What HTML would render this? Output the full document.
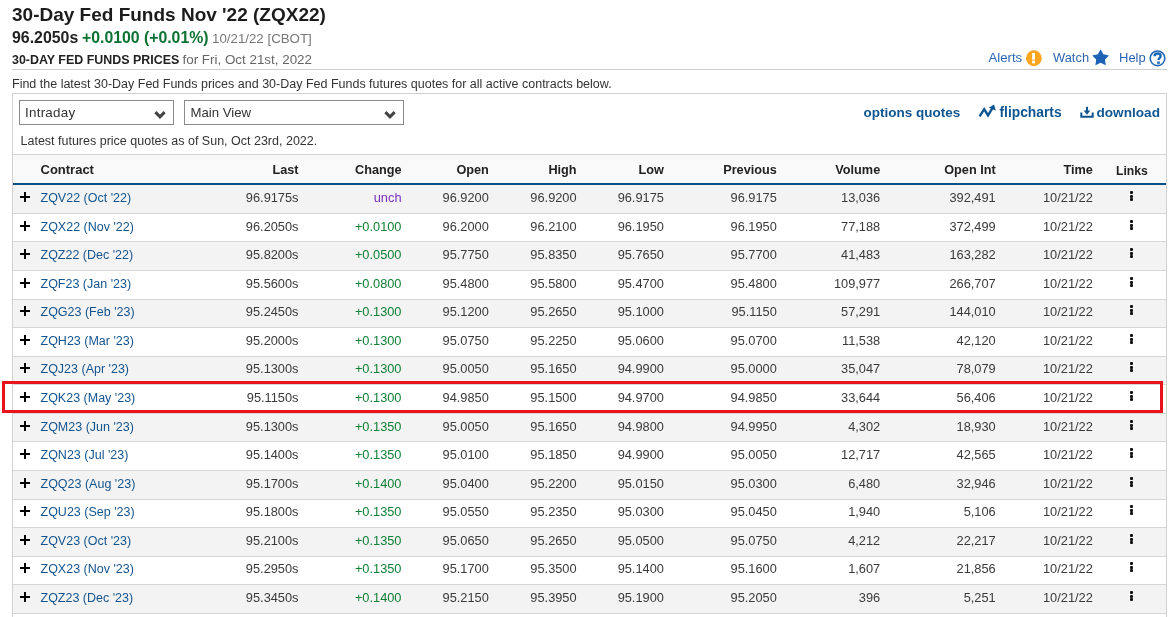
<!DOCTYPE html>
<html><head><meta charset="utf-8"><style>
*{margin:0;padding:0;box-sizing:border-box}
html,body{width:1170px;height:617px;overflow:hidden;background:#fff}
body{font-family:"Liberation Sans",sans-serif;color:#333;position:relative}
.wrap{position:absolute;left:0;top:0;width:1170px;height:617px;overflow:hidden;will-change:transform}
.a{position:absolute;white-space:nowrap;line-height:20px}
.r{text-align:right}
.title{font-size:19px;font-weight:bold;color:#1c1c1c}
.l2{font-size:15.9px;font-weight:bold;color:#222}
.g2{font-size:15.8px;font-weight:bold;color:#0b7232}
.d2{font-size:13.3px;color:#777}
.l3{font-size:12.45px;font-weight:bold;color:#222}
.f3{font-size:13.4px;color:#666}
.find{font-size:12.5px;color:#333}
.hr{position:absolute;left:12px;width:1155px;top:69px;height:1px;background:#cdcdcd}
.tool{font-size:13px;color:#2d66b3}
.box{position:absolute;left:12px;top:93px;width:1155px;height:540px;border:1px solid #d0d0d0;border-bottom:none;background:#fff}
.sel{position:absolute;top:100px;height:25px;border:1px solid #8a8a8a;background:#fff}
.selt{font-size:13.6px;color:#333}
.lnk{font-size:13.6px;font-weight:bold;color:#0f5591}
.latest{font-size:12.5px;color:#333}
.thead{position:absolute;left:13px;width:1153px;top:154px;height:31px;background:#f9f9f9;border-top:1px solid #d5d5d5;border-bottom:2px solid #0b4f8a}
.row{position:absolute;left:13px;width:1153px}
.odd{background:#f3f3f3}
.bd{position:absolute;left:13px;width:1153px;height:1px;background:#d6d6d6}
.th{font-size:12.7px;font-weight:bold;color:#222}
.td{font-size:12.8px;color:#3a3a3a}
.cl{font-size:12.5px;color:#14548e}
.up{color:#108035}
.un{color:#7a2fc4}
.plus{position:absolute;width:10px;height:10px}
.plus:before{content:"";position:absolute;left:0;top:3.7px;width:10.2px;height:2.6px;background:#000}
.plus:after{content:"";position:absolute;left:3.8px;top:0;width:2.6px;height:10.2px;background:#000}
.dots{position:absolute;left:1130px;width:3px}
.dots i{position:absolute;left:0;width:3px;height:3px;background:#111;border-radius:1px}
.red{position:absolute;left:2px;top:381px;width:1161px;height:32px;border:3px solid #e8141c}
</style></head><body><div class="wrap">
<div class="a title" style="left:12px;top:4.92px">30-Day Fed Funds Nov '22 (ZQX22)</div>
<div class="a l2" style="left:12px;top:27.79px">96.2050s</div>
<div class="a g2" style="left:82px;top:27.83px">+0.0100 (+0.01%)</div>
<div class="a d2" style="left:212px;top:28.69px">10/21/22 [CBOT]</div>
<div class="a l3" style="left:12px;top:50.19px">30-DAY FED FUNDS PRICES</div>
<div class="a f3" style="left:182.5px;top:49.86px">for Fri, Oct 21st, 2022</div>
<div class="a tool" style="left:988.5px;top:48.03px;font-size:13.2px">Alerts</div>
<div class="a tool" style="left:1053px;top:48.13px;font-size:12.9px">Watch</div>
<div class="a tool" style="left:1119px;top:48.10px">Help</div>
<svg style="position:absolute;left:1025px;top:49.5px" width="17" height="17" viewBox="0 0 17 17"><circle cx="8.9" cy="8.25" r="7.9" fill="#fda51e"/><rect x="7.1" y="3" width="2.8" height="6.7" fill="#fff"/><rect x="7.1" y="10.6" width="2.8" height="2.8" fill="#fff"/></svg>
<svg style="position:absolute;left:1091.5px;top:49.3px" width="18" height="17" viewBox="0 0 18 17"><path d="M8.60 0.30 L11.34 5.33 L16.97 6.38 L13.04 10.54 L13.77 16.22 L8.60 13.76 L3.43 16.22 L4.16 10.54 L0.23 6.38 L5.86 5.33 Z" fill="#1c63b6"/></svg>
<svg style="position:absolute;left:1148.5px;top:49.5px" width="17" height="17" viewBox="0 0 17 17"><circle cx="8.5" cy="8.3" r="7.3" fill="none" stroke="#1f68b9" stroke-width="1.6"/><path d="M5.6 6.3 C5.6 4.3 7 3.4 8.6 3.4 C10.4 3.4 11.6 4.5 11.6 6 C11.6 8.1 9.5 8.2 9.5 10.1" fill="none" stroke="#1f68b9" stroke-width="2.5"/><rect x="8.2" y="11.4" width="2.6" height="2.5" fill="#1f68b9"/></svg>
<div class="hr"></div>
<div class="a find" style="left:12px;top:74.27px">Find the latest 30-Day Fed Funds prices and 30-Day Fed Funds futures quotes for all active contracts below.</div>
<div class="box"></div>
<div class="sel" style="left:19px;width:155px"></div>
<div class="sel" style="left:184px;width:220px"></div>
<div class="a selt" style="left:25px;top:102.86px;font-size:13.4px;letter-spacing:0.25px">Intraday</div>
<div class="a selt" style="left:190.5px;top:102.93px;font-size:13.2px">Main View</div>
<svg style="position:absolute;left:154px;top:110px" width="12" height="9" viewBox="0 0 12 9"><path d="M1.4 2.2 L6 6.8 L10.6 2.2" fill="none" stroke="#444" stroke-width="3.1"/></svg>
<svg style="position:absolute;left:384px;top:110px" width="12" height="9" viewBox="0 0 12 9"><path d="M1.4 2.2 L6 6.8 L10.6 2.2" fill="none" stroke="#444" stroke-width="3.1"/></svg>
<div class="a lnk" style="left:863.5px;top:103.02px;font-size:13.5px">options quotes</div>
<div class="a lnk" style="left:999.5px;top:102.92px;font-size:13.8px">flipcharts</div>
<div class="a lnk" style="left:1096.5px;top:102.99px;font-size:13.6px">download</div>
<svg style="position:absolute;left:978px;top:104px" width="19" height="14" viewBox="0 0 19 14"><path d="M1.6 12.4 L6.2 5.2 L10 11.4 L14.4 4.2" fill="none" stroke="#0f5591" stroke-width="2.4" stroke-linejoin="miter"/><path d="M10.8 3.8 L16 0.6 L17.8 6.4 Z" fill="#0f5591"/></svg>
<svg style="position:absolute;left:1080px;top:106px" width="14" height="12" viewBox="0 0 14 12"><path d="M1.3 6.5 V10.7 H12.7 V6.5" fill="none" stroke="#0f5591" stroke-width="2"/><rect x="6" y="0.8" width="2" height="5" fill="#0f5591"/><path d="M3.6 4.6 H10.4 L7 8.8 Z" fill="#0f5591"/></svg>
<div class="a latest" style="left:20.5px;top:131.37px">Latest futures price quotes as of Sun, Oct 23rd, 2022.</div>
<div class="thead"></div>
<div class="a th" style="left:40.5px;top:160.30px;font-size:13px">Contract</div>
<div class="a th r" style="right:871.5px;top:160.40px">Last</div>
<div class="a th r" style="right:768.5px;top:160.40px">Change</div>
<div class="a th r" style="right:681.2px;top:160.40px">Open</div>
<div class="a th r" style="right:593.4px;top:160.40px">High</div>
<div class="a th r" style="right:506.1px;top:160.40px">Low</div>
<div class="a th r" style="right:393.20000000000005px;top:160.40px">Previous</div>
<div class="a th r" style="right:289.79999999999995px;top:160.40px">Volume</div>
<div class="a th r" style="right:174.29999999999995px;top:160.40px">Open Int</div>
<div class="a th r" style="right:77.20000000000005px;top:160.40px">Time</div>
<div class="a th" style="left:1116px;top:160.57px;font-size:12.2px">Links</div>
<div class="row odd" style="top:185px;height:28px"></div>
<div class="bd" style="top:213px"></div>
<div class="plus" style="left:20px;top:192px"></div>
<div class="a cl" style="left:40.5px;top:188.07px">ZQV22 (Oct '22)</div>
<div class="a td r" style="right:871.5px;top:187.96px">96.9175s</div>
<div class="a td r un" style="right:768.5px;top:187.96px">unch</div>
<div class="a td r" style="right:681.2px;top:187.96px">96.9200</div>
<div class="a td r" style="right:593.4px;top:187.96px">96.9200</div>
<div class="a td r" style="right:506.1px;top:187.96px">96.9175</div>
<div class="a td r" style="right:393.20000000000005px;top:187.96px">96.9175</div>
<div class="a td r" style="right:289.79999999999995px;top:187.96px">13,036</div>
<div class="a td r" style="right:174.29999999999995px;top:187.96px">392,491</div>
<div class="a td r" style="right:77.20000000000005px;top:187.96px">10/21/22</div>
<div class="dots" style="top:191px"><i style="top:0"></i><i style="top:3.6px"></i><i style="top:7.2px"></i></div>
<div class="bd" style="top:241px"></div>
<div class="plus" style="left:20px;top:221px"></div>
<div class="a cl" style="left:40.5px;top:216.64px">ZQX22 (Nov '22)</div>
<div class="a td r" style="right:871.5px;top:216.54px">96.2050s</div>
<div class="a td r up" style="right:768.5px;top:216.54px">+0.0100</div>
<div class="a td r" style="right:681.2px;top:216.54px">96.2000</div>
<div class="a td r" style="right:593.4px;top:216.54px">96.2100</div>
<div class="a td r" style="right:506.1px;top:216.54px">96.1950</div>
<div class="a td r" style="right:393.20000000000005px;top:216.54px">96.1950</div>
<div class="a td r" style="right:289.79999999999995px;top:216.54px">77,188</div>
<div class="a td r" style="right:174.29999999999995px;top:216.54px">372,499</div>
<div class="a td r" style="right:77.20000000000005px;top:216.54px">10/21/22</div>
<div class="dots" style="top:220px"><i style="top:0"></i><i style="top:3.6px"></i><i style="top:7.2px"></i></div>
<div class="row odd" style="top:242px;height:28px"></div>
<div class="bd" style="top:270px"></div>
<div class="plus" style="left:20px;top:249px"></div>
<div class="a cl" style="left:40.5px;top:245.21px">ZQZ22 (Dec '22)</div>
<div class="a td r" style="right:871.5px;top:245.11px">95.8200s</div>
<div class="a td r up" style="right:768.5px;top:245.11px">+0.0500</div>
<div class="a td r" style="right:681.2px;top:245.11px">95.7750</div>
<div class="a td r" style="right:593.4px;top:245.11px">95.8350</div>
<div class="a td r" style="right:506.1px;top:245.11px">95.7650</div>
<div class="a td r" style="right:393.20000000000005px;top:245.11px">95.7700</div>
<div class="a td r" style="right:289.79999999999995px;top:245.11px">41,483</div>
<div class="a td r" style="right:174.29999999999995px;top:245.11px">163,282</div>
<div class="a td r" style="right:77.20000000000005px;top:245.11px">10/21/22</div>
<div class="dots" style="top:248px"><i style="top:0"></i><i style="top:3.6px"></i><i style="top:7.2px"></i></div>
<div class="bd" style="top:299px"></div>
<div class="plus" style="left:20px;top:278px"></div>
<div class="a cl" style="left:40.5px;top:273.78px">ZQF23 (Jan '23)</div>
<div class="a td r" style="right:871.5px;top:273.68px">95.5600s</div>
<div class="a td r up" style="right:768.5px;top:273.68px">+0.0800</div>
<div class="a td r" style="right:681.2px;top:273.68px">95.4800</div>
<div class="a td r" style="right:593.4px;top:273.68px">95.5800</div>
<div class="a td r" style="right:506.1px;top:273.68px">95.4700</div>
<div class="a td r" style="right:393.20000000000005px;top:273.68px">95.4800</div>
<div class="a td r" style="right:289.79999999999995px;top:273.68px">109,977</div>
<div class="a td r" style="right:174.29999999999995px;top:273.68px">266,707</div>
<div class="a td r" style="right:77.20000000000005px;top:273.68px">10/21/22</div>
<div class="dots" style="top:277px"><i style="top:0"></i><i style="top:3.6px"></i><i style="top:7.2px"></i></div>
<div class="row odd" style="top:300px;height:27px"></div>
<div class="bd" style="top:327px"></div>
<div class="plus" style="left:20px;top:306px"></div>
<div class="a cl" style="left:40.5px;top:302.35px">ZQG23 (Feb '23)</div>
<div class="a td r" style="right:871.5px;top:302.25px">95.2450s</div>
<div class="a td r up" style="right:768.5px;top:302.25px">+0.1300</div>
<div class="a td r" style="right:681.2px;top:302.25px">95.1200</div>
<div class="a td r" style="right:593.4px;top:302.25px">95.2650</div>
<div class="a td r" style="right:506.1px;top:302.25px">95.1000</div>
<div class="a td r" style="right:393.20000000000005px;top:302.25px">95.1150</div>
<div class="a td r" style="right:289.79999999999995px;top:302.25px">57,291</div>
<div class="a td r" style="right:174.29999999999995px;top:302.25px">144,010</div>
<div class="a td r" style="right:77.20000000000005px;top:302.25px">10/21/22</div>
<div class="dots" style="top:305px"><i style="top:0"></i><i style="top:3.6px"></i><i style="top:7.2px"></i></div>
<div class="bd" style="top:356px"></div>
<div class="plus" style="left:20px;top:335px"></div>
<div class="a cl" style="left:40.5px;top:330.92px">ZQH23 (Mar '23)</div>
<div class="a td r" style="right:871.5px;top:330.82px">95.2000s</div>
<div class="a td r up" style="right:768.5px;top:330.82px">+0.1300</div>
<div class="a td r" style="right:681.2px;top:330.82px">95.0750</div>
<div class="a td r" style="right:593.4px;top:330.82px">95.2250</div>
<div class="a td r" style="right:506.1px;top:330.82px">95.0600</div>
<div class="a td r" style="right:393.20000000000005px;top:330.82px">95.0700</div>
<div class="a td r" style="right:289.79999999999995px;top:330.82px">11,538</div>
<div class="a td r" style="right:174.29999999999995px;top:330.82px">42,120</div>
<div class="a td r" style="right:77.20000000000005px;top:330.82px">10/21/22</div>
<div class="dots" style="top:334px"><i style="top:0"></i><i style="top:3.6px"></i><i style="top:7.2px"></i></div>
<div class="row odd" style="top:357px;height:27px"></div>
<div class="bd" style="top:384px"></div>
<div class="plus" style="left:20px;top:363px"></div>
<div class="a cl" style="left:40.5px;top:359.49px">ZQJ23 (Apr '23)</div>
<div class="a td r" style="right:871.5px;top:359.39px">95.1300s</div>
<div class="a td r up" style="right:768.5px;top:359.39px">+0.1300</div>
<div class="a td r" style="right:681.2px;top:359.39px">95.0050</div>
<div class="a td r" style="right:593.4px;top:359.39px">95.1650</div>
<div class="a td r" style="right:506.1px;top:359.39px">94.9900</div>
<div class="a td r" style="right:393.20000000000005px;top:359.39px">95.0000</div>
<div class="a td r" style="right:289.79999999999995px;top:359.39px">35,047</div>
<div class="a td r" style="right:174.29999999999995px;top:359.39px">78,079</div>
<div class="a td r" style="right:77.20000000000005px;top:359.39px">10/21/22</div>
<div class="dots" style="top:362px"><i style="top:0"></i><i style="top:3.6px"></i><i style="top:7.2px"></i></div>
<div class="bd" style="top:413px"></div>
<div class="plus" style="left:20px;top:392px"></div>
<div class="a cl" style="left:40.5px;top:388.07px">ZQK23 (May '23)</div>
<div class="a td r" style="right:871.5px;top:387.96px">95.1150s</div>
<div class="a td r up" style="right:768.5px;top:387.96px">+0.1300</div>
<div class="a td r" style="right:681.2px;top:387.96px">94.9850</div>
<div class="a td r" style="right:593.4px;top:387.96px">95.1500</div>
<div class="a td r" style="right:506.1px;top:387.96px">94.9700</div>
<div class="a td r" style="right:393.20000000000005px;top:387.96px">94.9850</div>
<div class="a td r" style="right:289.79999999999995px;top:387.96px">33,644</div>
<div class="a td r" style="right:174.29999999999995px;top:387.96px">56,406</div>
<div class="a td r" style="right:77.20000000000005px;top:387.96px">10/21/22</div>
<div class="dots" style="top:391px"><i style="top:0"></i><i style="top:3.6px"></i><i style="top:7.2px"></i></div>
<div class="row odd" style="top:414px;height:27px"></div>
<div class="bd" style="top:441px"></div>
<div class="plus" style="left:20px;top:421px"></div>
<div class="a cl" style="left:40.5px;top:416.64px">ZQM23 (Jun '23)</div>
<div class="a td r" style="right:871.5px;top:416.53px">95.1300s</div>
<div class="a td r up" style="right:768.5px;top:416.53px">+0.1350</div>
<div class="a td r" style="right:681.2px;top:416.53px">95.0050</div>
<div class="a td r" style="right:593.4px;top:416.53px">95.1650</div>
<div class="a td r" style="right:506.1px;top:416.53px">94.9800</div>
<div class="a td r" style="right:393.20000000000005px;top:416.53px">94.9950</div>
<div class="a td r" style="right:289.79999999999995px;top:416.53px">4,302</div>
<div class="a td r" style="right:174.29999999999995px;top:416.53px">18,930</div>
<div class="a td r" style="right:77.20000000000005px;top:416.53px">10/21/22</div>
<div class="dots" style="top:420px"><i style="top:0"></i><i style="top:3.6px"></i><i style="top:7.2px"></i></div>
<div class="bd" style="top:470px"></div>
<div class="plus" style="left:20px;top:449px"></div>
<div class="a cl" style="left:40.5px;top:445.21px">ZQN23 (Jul '23)</div>
<div class="a td r" style="right:871.5px;top:445.10px">95.1400s</div>
<div class="a td r up" style="right:768.5px;top:445.10px">+0.1350</div>
<div class="a td r" style="right:681.2px;top:445.10px">95.0100</div>
<div class="a td r" style="right:593.4px;top:445.10px">95.1850</div>
<div class="a td r" style="right:506.1px;top:445.10px">94.9900</div>
<div class="a td r" style="right:393.20000000000005px;top:445.10px">95.0050</div>
<div class="a td r" style="right:289.79999999999995px;top:445.10px">12,717</div>
<div class="a td r" style="right:174.29999999999995px;top:445.10px">42,565</div>
<div class="a td r" style="right:77.20000000000005px;top:445.10px">10/21/22</div>
<div class="dots" style="top:448px"><i style="top:0"></i><i style="top:3.6px"></i><i style="top:7.2px"></i></div>
<div class="row odd" style="top:471px;height:28px"></div>
<div class="bd" style="top:499px"></div>
<div class="plus" style="left:20px;top:478px"></div>
<div class="a cl" style="left:40.5px;top:473.78px">ZQQ23 (Aug '23)</div>
<div class="a td r" style="right:871.5px;top:473.67px">95.1700s</div>
<div class="a td r up" style="right:768.5px;top:473.67px">+0.1400</div>
<div class="a td r" style="right:681.2px;top:473.67px">95.0400</div>
<div class="a td r" style="right:593.4px;top:473.67px">95.2200</div>
<div class="a td r" style="right:506.1px;top:473.67px">95.0150</div>
<div class="a td r" style="right:393.20000000000005px;top:473.67px">95.0300</div>
<div class="a td r" style="right:289.79999999999995px;top:473.67px">6,480</div>
<div class="a td r" style="right:174.29999999999995px;top:473.67px">32,946</div>
<div class="a td r" style="right:77.20000000000005px;top:473.67px">10/21/22</div>
<div class="dots" style="top:477px"><i style="top:0"></i><i style="top:3.6px"></i><i style="top:7.2px"></i></div>
<div class="bd" style="top:527px"></div>
<div class="plus" style="left:20px;top:506px"></div>
<div class="a cl" style="left:40.5px;top:502.35px">ZQU23 (Sep '23)</div>
<div class="a td r" style="right:871.5px;top:502.25px">95.1800s</div>
<div class="a td r up" style="right:768.5px;top:502.25px">+0.1350</div>
<div class="a td r" style="right:681.2px;top:502.25px">95.0550</div>
<div class="a td r" style="right:593.4px;top:502.25px">95.2350</div>
<div class="a td r" style="right:506.1px;top:502.25px">95.0300</div>
<div class="a td r" style="right:393.20000000000005px;top:502.25px">95.0450</div>
<div class="a td r" style="right:289.79999999999995px;top:502.25px">1,940</div>
<div class="a td r" style="right:174.29999999999995px;top:502.25px">5,106</div>
<div class="a td r" style="right:77.20000000000005px;top:502.25px">10/21/22</div>
<div class="dots" style="top:505px"><i style="top:0"></i><i style="top:3.6px"></i><i style="top:7.2px"></i></div>
<div class="row odd" style="top:528px;height:28px"></div>
<div class="bd" style="top:556px"></div>
<div class="plus" style="left:20px;top:535px"></div>
<div class="a cl" style="left:40.5px;top:530.92px">ZQV23 (Oct '23)</div>
<div class="a td r" style="right:871.5px;top:530.82px">95.2100s</div>
<div class="a td r up" style="right:768.5px;top:530.82px">+0.1350</div>
<div class="a td r" style="right:681.2px;top:530.82px">95.0650</div>
<div class="a td r" style="right:593.4px;top:530.82px">95.2650</div>
<div class="a td r" style="right:506.1px;top:530.82px">95.0500</div>
<div class="a td r" style="right:393.20000000000005px;top:530.82px">95.0750</div>
<div class="a td r" style="right:289.79999999999995px;top:530.82px">4,212</div>
<div class="a td r" style="right:174.29999999999995px;top:530.82px">22,217</div>
<div class="a td r" style="right:77.20000000000005px;top:530.82px">10/21/22</div>
<div class="dots" style="top:534px"><i style="top:0"></i><i style="top:3.6px"></i><i style="top:7.2px"></i></div>
<div class="bd" style="top:584px"></div>
<div class="plus" style="left:20px;top:563px"></div>
<div class="a cl" style="left:40.5px;top:559.49px">ZQX23 (Nov '23)</div>
<div class="a td r" style="right:871.5px;top:559.39px">95.2950s</div>
<div class="a td r up" style="right:768.5px;top:559.39px">+0.1350</div>
<div class="a td r" style="right:681.2px;top:559.39px">95.1700</div>
<div class="a td r" style="right:593.4px;top:559.39px">95.3500</div>
<div class="a td r" style="right:506.1px;top:559.39px">95.1400</div>
<div class="a td r" style="right:393.20000000000005px;top:559.39px">95.1600</div>
<div class="a td r" style="right:289.79999999999995px;top:559.39px">1,607</div>
<div class="a td r" style="right:174.29999999999995px;top:559.39px">21,856</div>
<div class="a td r" style="right:77.20000000000005px;top:559.39px">10/21/22</div>
<div class="dots" style="top:562px"><i style="top:0"></i><i style="top:3.6px"></i><i style="top:7.2px"></i></div>
<div class="row odd" style="top:585px;height:28px"></div>
<div class="bd" style="top:613px"></div>
<div class="plus" style="left:20px;top:592px"></div>
<div class="a cl" style="left:40.5px;top:588.06px">ZQZ23 (Dec '23)</div>
<div class="a td r" style="right:871.5px;top:587.96px">95.3450s</div>
<div class="a td r up" style="right:768.5px;top:587.96px">+0.1400</div>
<div class="a td r" style="right:681.2px;top:587.96px">95.2150</div>
<div class="a td r" style="right:593.4px;top:587.96px">95.3950</div>
<div class="a td r" style="right:506.1px;top:587.96px">95.1900</div>
<div class="a td r" style="right:393.20000000000005px;top:587.96px">95.2050</div>
<div class="a td r" style="right:289.79999999999995px;top:587.96px">396</div>
<div class="a td r" style="right:174.29999999999995px;top:587.96px">5,251</div>
<div class="a td r" style="right:77.20000000000005px;top:587.96px">10/21/22</div>
<div class="dots" style="top:591px"><i style="top:0"></i><i style="top:3.6px"></i><i style="top:7.2px"></i></div>
<div class="red"></div>
</div></body></html>
